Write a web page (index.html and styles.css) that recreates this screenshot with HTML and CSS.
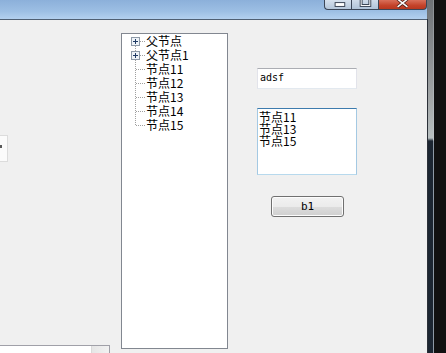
FILE: index.html
```html
<!DOCTYPE html>
<html>
<head>
<meta charset="utf-8">
<link rel="stylesheet" href="styles.css">
</head>
<body>
<div class="window">
  <div class="main-pane">
    <div class="titlebar">
      <div class="cap cap-min">
        <svg width="27" height="10" viewBox="0 0 27 10"><rect x="10.5" y="2.5" width="10" height="4" fill="#fff" stroke="#3a4454"/></svg>
      </div>
      <div class="cap cap-max">
        <svg width="27" height="10" viewBox="0 0 27 10"><rect x="9.5" y="-3.5" width="9" height="9" fill="none" stroke="#3a4454" stroke-width="3"/><rect x="9.5" y="-3.5" width="9" height="9" fill="none" stroke="#fff" stroke-width="1"/></svg>
      </div>
      <div class="cap cap-close">
        <svg width="48" height="10" viewBox="0 0 48 10"><path d="M19 -1 L29 7 M29 -1 L19 7" stroke="#4a2018" stroke-width="3.2"/><path d="M19 -1 L29 7 M29 -1 L19 7" stroke="#fff" stroke-width="1.6"/></svg>
      </div>
    </div>
    <div class="client">
      <div class="col-left">
        <div class="stub"><span class="stub-mark"></span></div>
        <div class="grid-stub"><div class="grid-scroll"></div></div>
      </div>
      <div class="tree">
        <div class="tree-row">
          <svg class="gutter" width="24" height="14" viewBox="0 0 24 14"><path d="M13.5 12 V14" class="dot"/><path d="M18 7.5 H24" class="dot"/><rect x="9.5" y="3.5" width="8" height="8" class="pbox"/><path d="M11 7.5 H16 M13.5 5 V10" class="plus"/></svg>
          <span>父节点</span>
        </div>
        <div class="tree-row">
          <svg class="gutter" width="24" height="14" viewBox="0 0 24 14"><path d="M13.5 0 V3 M13.5 12 V14" class="dot"/><path d="M18 7.5 H24" class="dot"/><rect x="9.5" y="3.5" width="8" height="8" class="pbox"/><path d="M11 7.5 H16 M13.5 5 V10" class="plus"/></svg>
          <span>父节点1</span>
        </div>
        <div class="tree-row">
          <svg class="gutter" width="24" height="14" viewBox="0 0 24 14"><path d="M13.5 0 V14" class="dot"/><path d="M14 7.5 H24" class="dot"/></svg>
          <span>节点11</span>
        </div>
        <div class="tree-row">
          <svg class="gutter" width="24" height="14" viewBox="0 0 24 14"><path d="M13.5 0 V14" class="dot"/><path d="M14 7.5 H24" class="dot"/></svg>
          <span>节点12</span>
        </div>
        <div class="tree-row">
          <svg class="gutter" width="24" height="14" viewBox="0 0 24 14"><path d="M13.5 0 V14" class="dot"/><path d="M14 7.5 H24" class="dot"/></svg>
          <span>节点13</span>
        </div>
        <div class="tree-row">
          <svg class="gutter" width="24" height="14" viewBox="0 0 24 14"><path d="M13.5 0 V14" class="dot"/><path d="M14 7.5 H24" class="dot"/></svg>
          <span>节点14</span>
        </div>
        <div class="tree-row">
          <svg class="gutter" width="24" height="14" viewBox="0 0 24 14"><path d="M13.5 0 V8" class="dot"/><path d="M14 7.5 H24" class="dot"/></svg>
          <span>节点15</span>
        </div>
      </div>
      <div class="col-right">
        <div class="textbox">adsf</div>
        <div class="listbox">
          <div>节点11</div>
          <div>节点13</div>
          <div>节点15</div>
        </div>
        <div class="btn">b1</div>
      </div>
    </div>
  </div>
  <div class="frame-right">
    <div class="fr-line"></div>
    <div class="fr-band"></div>
    <div class="fr-light"></div>
    <div class="fr-black"></div>
  </div>
</div>
</body>
</html>
```
FILE: styles.css
```css
html, body {
  margin: 0;
  padding: 0;
  background: #f0f0f0;
}
.window {
  display: flex;
  width: 446px;
  height: 353px;
  overflow: hidden;
  font-family: "Noto Sans CJK SC", "Noto Sans", sans-serif;
  font-size: 12px;
  color: #000;
}
.main-pane {
  width: 427px;
  display: flex;
  flex-direction: column;
  overflow: hidden;
}
.titlebar {
  flex: none;
  height: 19px;
  border-bottom: 1px solid #4f5f73;
  background: linear-gradient(to bottom, #8cb0da 0%, #9dbfe4 60%, #b3d0ef 100%);
  display: flex;
  justify-content: flex-end;
  align-items: flex-start;
}
.cap {
  height: 9px;
  border-bottom: 1px solid #3b4657;
  display: flex;
}
.cap svg { display: block; }
.cap-min {
  width: 26px;
  border-left: 1px solid #3b4657;
  border-bottom-left-radius: 4px;
  background: linear-gradient(to bottom, #d6e1ee, #b4c6da);
}
.cap-max {
  width: 26px;
  border-left: 1px solid #3b4657;
  background: linear-gradient(to bottom, #d0dcea, #b0c3d8);
}
.cap-close {
  width: 47px;
  border-left: 1px solid #3b4657;
  border-right: 1px solid #3b4657;
  border-bottom-right-radius: 4px;
  background: linear-gradient(to bottom, #d9705a, #c4432a 60%, #b8381f);
}
.client {
  flex: 1 1 auto;
  min-height: 0;
  overflow: hidden;
  display: flex;
  align-items: flex-start;
  background: #f0f0f0;
}
.col-left {
  flex: none;
  width: 110px;
  display: flex;
  flex-direction: column;
  padding-top: 115px;
}
.stub {
  flex: none;
  width: 7px;
  height: 25px;
  background: #fbfbfb;
  border: 1px solid #dcdcdc;
  border-left: none;
  display: flex;
  align-items: flex-start;
}
.stub-mark {
  width: 2px;
  height: 3px;
  margin-top: 9px;
  background: #5a5a5a;
}
.grid-stub {
  flex: none;
  margin-top: 183px;
  width: 110px;
  height: 12px;
  box-sizing: border-box;
  border-top: 1px solid #a0a0a8;
  border-right: 1px solid #a0a0a8;
  background: #fff;
  display: flex;
  justify-content: flex-end;
}
.grid-scroll {
  width: 17px;
  background: linear-gradient(to right, #e6e6e6, #f2f2f2);
  border-left: 1px solid #dadada;
}
.tree {
  flex: none;
  margin-left: 11px;
  margin-top: 13px;
  width: 107px;
  height: 316px;
  box-sizing: border-box;
  border: 1px solid #828790;
  background: #fff;
}
.tree-row {
  height: 14px;
  line-height: 14px;
  display: flex;
  align-items: center;
  white-space: nowrap;
}
.gutter {
  display: block;
  flex: none;
}
.dot {
  stroke: #a0a0a0;
  stroke-width: 1;
  stroke-dasharray: 1 1;
  fill: none;
}
.pbox {
  fill: #eef3f8;
  stroke: #8e9aa8;
  stroke-width: 1;
}
.plus {
  stroke: #1f3a64;
  stroke-width: 1;
  fill: none;
}
.col-right {
  flex: none;
  margin-left: 29px;
  display: flex;
  flex-direction: column;
  padding-top: 48px;
}
.textbox {
  width: 100px;
  height: 21px;
  box-sizing: border-box;
  border: 1px solid;
  border-color: #abadb3 #e2e3ea #e3e9ef #e2e3ea;
  background: #fff;
  padding-left: 2px;
  font-family: "DejaVu Sans Mono", "Liberation Mono", monospace;
  font-size: 10px;
  line-height: 18px;
}
.listbox {
  margin-top: 19px;
  width: 100px;
  height: 67px;
  box-sizing: border-box;
  border: 1px solid;
  border-color: #3d7bad #a4c9e3 #b7d9ed #a4c9e3;
  background: #fff;
  padding: 2px 0 0 1px;
  line-height: 12px;
}
.btn {
  margin-top: 21px;
  margin-left: 14px;
  width: 73px;
  height: 21px;
  box-sizing: border-box;
  border: 1px solid #707070;
  border-radius: 3px;
  box-shadow: inset 0 0 0 1px #fcfcfc;
  background: linear-gradient(to bottom, #f2f2f2 0%, #ebebeb 50%, #dddddd 50%, #cfcfcf 100%);
  display: flex;
  align-items: center;
  justify-content: center;
  font-family: "DejaVu Sans Mono", monospace;
  font-size: 11px;
}
.frame-right {
  flex: none;
  width: 19px;
  display: flex;
}
.fr-line {
  width: 1px;
  background: linear-gradient(to bottom, #707478 0, #707478 19px, #2b3038 19px);
}
.fr-band {
  width: 5px;
  background: linear-gradient(to bottom, #6e7276 0, #a3a7a8 100px, #b8c0c1 138px, #1c2632 141px, #1c2632 100%);
}
.fr-light {
  width: 1px;
  background: linear-gradient(to bottom, #8a8e92 0, #c0c6ca 140px, #8e9aa6 141px);
}
.fr-black {
  width: 12px;
  background: #111;
}
```
